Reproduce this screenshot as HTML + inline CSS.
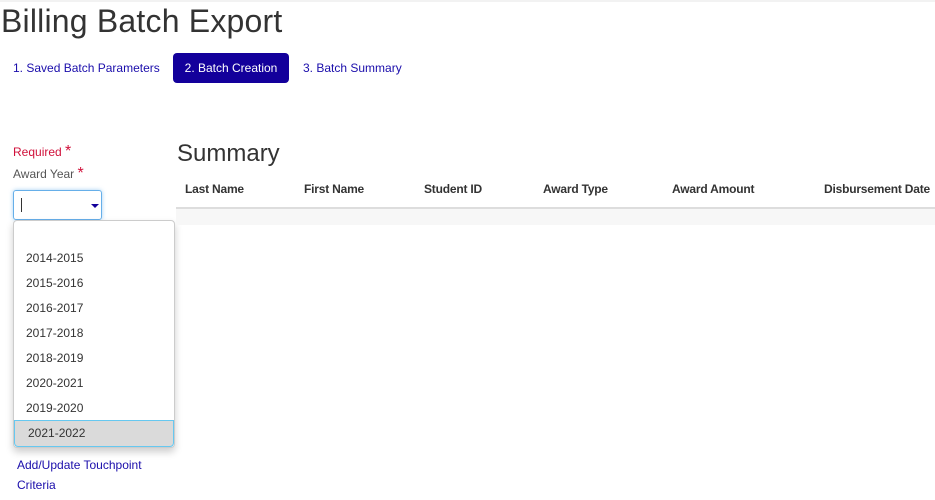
<!DOCTYPE html>
<html><head><style>
body{margin:0;width:935px;height:500px;background:#fff;font-family:"Liberation Sans",sans-serif;position:relative;overflow:hidden;color:#333}
.a{position:absolute;white-space:nowrap}
.topline{position:absolute;left:0;top:0;width:935px;height:2px;background:#f2f2f2}
h1{position:absolute;left:1px;top:3px;margin:0;font-weight:normal;font-size:32px;color:#333;letter-spacing:0.2px}
.tab{font-size:12px;color:#1a0dab}
.tab.act{background:#13009b;color:#fff;border-radius:4px;left:173px;top:53px;width:116px;height:30px;line-height:30px;text-align:center}
.star{color:#d0103a;font-size:16px}
.sel{position:absolute;left:13px;top:190px;width:87px;height:28px;border:1px solid #66afe9;border-radius:3px;box-shadow:0 0 4px rgba(102,175,233,.6)}
.dd{position:absolute;left:13px;top:220px;width:160px;height:226px;border:1px solid #ccc;border-radius:4px;box-shadow:0 4px 8px rgba(0,0,0,.2);background:#fff}
.opt{position:absolute;left:12px;font-size:12px;color:#333}
.h{position:absolute;top:182px;font-size:12px;font-weight:bold;letter-spacing:-0.2px}
</style></head><body>
<div class="topline"></div>
<h1>Billing Batch Export</h1>
<div class="a tab" style="left:13px;top:61px">1. Saved Batch Parameters</div>
<div class="a tab act">2. Batch Creation</div>
<div class="a tab" style="left:303px;top:61px">3. Batch Summary</div>
<div class="a" style="left:13px;top:143px;font-size:12px;color:#d0103a">Required <span class="star">*</span></div>
<div class="a" style="left:13px;top:165px;font-size:12px;color:#555">Award Year <span class="star">*</span></div>
<div class="sel"><div style="position:absolute;left:7px;top:7px;width:1px;height:14px;background:#333"></div>
<div style="position:absolute;left:77px;top:13px;width:0;height:0;border-left:4px solid transparent;border-right:4px solid transparent;border-top:4px solid #13009b"></div></div>
<div class="dd">
<div class="opt" style="top:30px">2014-2015</div>
<div class="opt" style="top:55px">2015-2016</div>
<div class="opt" style="top:80px">2016-2017</div>
<div class="opt" style="top:105px">2017-2018</div>
<div class="opt" style="top:130px">2018-2019</div>
<div class="opt" style="top:155px">2020-2021</div>
<div class="opt" style="top:180px">2019-2020</div>
<div style="position:absolute;left:0;top:199px;width:158px;height:25px;background:#dadada;border:1px solid #66c8f0;border-radius:0 0 4px 4px"></div>
<div class="opt" style="top:205px;left:14px">2021-2022</div>
</div>
<div class="a" style="left:17px;top:455px;font-size:12px;color:#1a0dab;line-height:20px">Add/Update Touchpoint<br>Criteria</div>
<div class="a" style="left:177px;top:140px;font-size:24px;color:#333">Summary</div>
<div class="h" style="left:185px">Last Name</div>
<div class="h" style="left:304px">First Name</div>
<div class="h" style="left:424px">Student ID</div>
<div class="h" style="left:543px">Award Type</div>
<div class="h" style="left:672px">Award Amount</div>
<div class="h" style="left:824px">Disbursement Date</div>
<div style="position:absolute;left:176px;top:207px;width:759px;height:2px;background:#ddd"></div>
<div style="position:absolute;left:176px;top:209px;width:759px;height:16px;background:#f7f7f7"></div>
</body></html>
